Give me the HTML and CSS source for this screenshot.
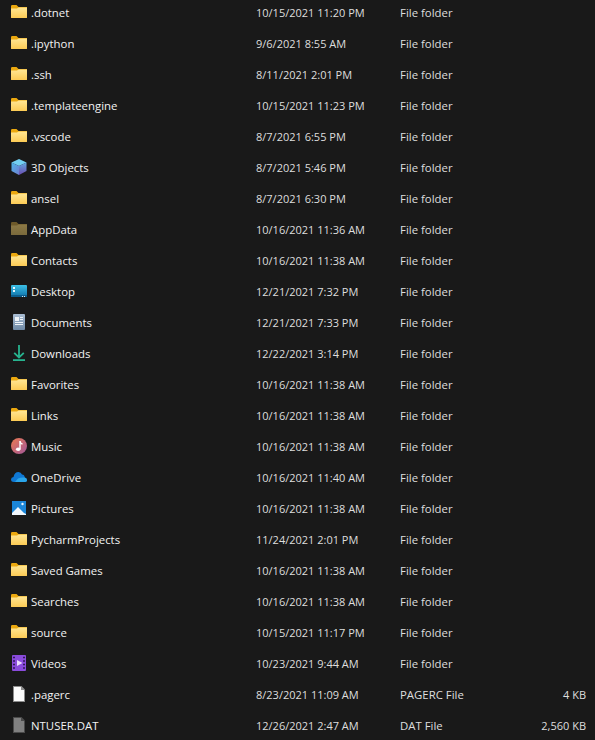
FILE: index.html
```html
<!DOCTYPE html>
<html lang="en">
<head>
<meta charset="utf-8">
<title>Home folder</title>
<link rel="stylesheet" href="styles.css">
</head>
<body>
<svg class="defs" width="0" height="0" aria-hidden="true">
  <defs>
    <linearGradient id="fg" x1="0" y1="0" x2="0" y2="1"><stop offset="0" stop-color="#ffe694"/><stop offset="1" stop-color="#fccb55"/></linearGradient>
    <linearGradient id="fd" x1="0" y1="0" x2="0" y2="1"><stop offset="0" stop-color="#8d7a46"/><stop offset="1" stop-color="#7a6a3c"/></linearGradient>
    <linearGradient id="cubeL" x1="0" y1="0" x2="1" y2="1"><stop offset="0" stop-color="#4fb6ea"/><stop offset="1" stop-color="#6f7fd0"/></linearGradient>
    <linearGradient id="cubeR" x1="0" y1="0" x2="0" y2="1"><stop offset="0" stop-color="#62a8df"/><stop offset="1" stop-color="#6a4bb0"/></linearGradient>
    <linearGradient id="desk" x1="0" y1="0" x2="0" y2="1"><stop offset="0" stop-color="#3cc0e6"/><stop offset="1" stop-color="#1176ac"/></linearGradient>
    <linearGradient id="doc" x1="0" y1="0" x2="0" y2="1"><stop offset="0" stop-color="#a9bdd3"/><stop offset="1" stop-color="#6f8aa6"/></linearGradient>
    <linearGradient id="mus" x1="0" y1="0" x2="1" y2="1"><stop offset="0" stop-color="#ee7b50"/><stop offset="1" stop-color="#a0569a"/></linearGradient>
    <symbol id="folder" viewBox="0 0 16 16"><path d="M0 2.200Q0 1 1.200 1H5.500L7.500 3H16V14H0Z" fill="#eba80f"/><path d="M0 4.500H6L7.500 3.500H16V13.300Q16 14 15.300 14H.7Q0 14 0 13.300Z" fill="url(#fg)"/></symbol>
    <symbol id="folder-dim" viewBox="0 0 16 16"><path d="M0 2.200Q0 1 1.200 1H5.500L7.500 3H16V14H0Z" fill="#6e5a2a"/><path d="M0 4.500H6L7.500 3.500H16V13.300Q16 14 15.300 14H.7Q0 14 0 13.300Z" fill="url(#fd)"/></symbol>
    <symbol id="objects" viewBox="0 0 16 16"><path d="M8 0 15.500 3.500 8 7 .5 3.500Z" fill="#72d0f2"/><path d="M.5 3.500 8 7V16L.5 12Z" fill="url(#cubeL)"/><path d="M15.500 3.500 8 7V16L15.500 12Z" fill="url(#cubeR)"/></symbol>
    <symbol id="desktop" viewBox="0 0 16 16"><rect y="2" width="16" height="11" rx="1" fill="url(#desk)"/><rect y="12" width="16" height="2" fill="#0c5d8c"/><rect x="2" y="4" width="2" height="2" fill="#e8f6fc"/><rect x="2" y="7" width="2" height="2" fill="#e8f6fc"/><rect x="11" y="13" width="1" height="1" fill="#cfe6f2"/><rect x="13" y="13" width="1" height="1" fill="#cfe6f2"/></symbol>
    <symbol id="documents" viewBox="0 0 16 16"><rect x="2" width="12" height="16" rx="1" fill="url(#doc)"/><rect x="4" y="3" width="4" height="4" fill="#eef3f8"/><path d="M9 3.500h3M9 5.500h3M4 8.500h8M4 10.500h8" stroke="#eef3f8" stroke-width="1"/></symbol>
    <symbol id="downloads" viewBox="0 0 16 16"><path d="M8 0V12.500M3.200 7.800 8 12.500 12.800 7.800" fill="none" stroke="#27b48f" stroke-width="1.800"/><rect x="2" y="14.200" width="12" height="1.800" fill="#27b48f"/></symbol>
    <symbol id="music" viewBox="0 0 16 16"><circle cx="8" cy="8" r="8" fill="url(#mus)"/><path d="M9 3V11" stroke="#fff" stroke-width="1.400"/><path d="M9 3.300Q9.500 5.500 11.500 6" stroke="#fff" stroke-width="1.300" fill="none"/><ellipse cx="7.200" cy="11.300" rx="2.300" ry="1.800" fill="#fff"/></symbol>
    <symbol id="onedrive" viewBox="0 0 16 16"><path d="M3 13Q0 13 0 10.500 0 8.300 2.500 8 3.500 3 7.500 3 10 3 11 5.500 13.500 5.500 13.800 8.500 16 9.300 16 11.300 16 13 14 13Z" fill="#0f78d4"/><path d="M4 13 7 9.500Q10 8 13.800 8.500 16 9.300 16 11.300 16 13 14 13Z" fill="#2ba6ea"/></symbol>
    <symbol id="pictures" viewBox="0 0 16 16"><rect x="1" y="1" width="14" height="14" fill="#1b86d8"/><path d="M1 13 7 7 13 13 15 14V15H1Z" fill="#f2f8fd"/><circle cx="11.500" cy="4" r="1.200" fill="#eaf5fd"/></symbol>
    <symbol id="videos" viewBox="0 0 16 16"><rect x="1" y="0" width="14" height="16" rx="1" fill="#8a4bdc"/><path d="M6 5 11.500 8 6 11Z" fill="#eadcfc"/><path d="M2 2.500h2M2 6h2M2 9.500h2M2 13h2M12 2.500h2M12 6h2M12 9.500h2M12 13h2" stroke="#32195a" stroke-width="1.300"/></symbol>
    <symbol id="file" viewBox="0 0 16 16"><path d="M2 0H10.500L14 3.500V16H2Z" fill="#8c8c8c"/><path d="M3 1H10V4H13V15H3Z" fill="#fbfbfb"/></symbol>
    <symbol id="file-dim" viewBox="0 0 16 16"><path d="M2 0H10.500L14 3.500V16H2Z" fill="#4a4a4a"/><path d="M3 1H10V4H13V15H3Z" fill="#808080"/></symbol>
  </defs>
</svg>
<main class="list">
  <div class="row"><svg class="ico"><use href="#folder"/></svg><span class="name">.dotnet</span><span class="date">10/15/2021 11:20 PM</span><span>File folder</span><span class="size"></span></div>
  <div class="row"><svg class="ico"><use href="#folder"/></svg><span class="name">.ipython</span><span class="date">9/6/2021 8:55 AM</span><span>File folder</span><span class="size"></span></div>
  <div class="row"><svg class="ico"><use href="#folder"/></svg><span class="name">.ssh</span><span class="date">8/11/2021 2:01 PM</span><span>File folder</span><span class="size"></span></div>
  <div class="row"><svg class="ico"><use href="#folder"/></svg><span class="name">.templateengine</span><span class="date">10/15/2021 11:23 PM</span><span>File folder</span><span class="size"></span></div>
  <div class="row"><svg class="ico"><use href="#folder"/></svg><span class="name">.vscode</span><span class="date">8/7/2021 6:55 PM</span><span>File folder</span><span class="size"></span></div>
  <div class="row"><svg class="ico"><use href="#objects"/></svg><span class="name">3D Objects</span><span class="date">8/7/2021 5:46 PM</span><span>File folder</span><span class="size"></span></div>
  <div class="row"><svg class="ico"><use href="#folder"/></svg><span class="name">ansel</span><span class="date">8/7/2021 6:30 PM</span><span>File folder</span><span class="size"></span></div>
  <div class="row"><svg class="ico"><use href="#folder-dim"/></svg><span class="name">AppData</span><span class="date">10/16/2021 11:36 AM</span><span>File folder</span><span class="size"></span></div>
  <div class="row"><svg class="ico"><use href="#folder"/></svg><span class="name">Contacts</span><span class="date">10/16/2021 11:38 AM</span><span>File folder</span><span class="size"></span></div>
  <div class="row"><svg class="ico"><use href="#desktop"/></svg><span class="name">Desktop</span><span class="date">12/21/2021 7:32 PM</span><span>File folder</span><span class="size"></span></div>
  <div class="row"><svg class="ico"><use href="#documents"/></svg><span class="name">Documents</span><span class="date">12/21/2021 7:33 PM</span><span>File folder</span><span class="size"></span></div>
  <div class="row"><svg class="ico"><use href="#downloads"/></svg><span class="name">Downloads</span><span class="date">12/22/2021 3:14 PM</span><span>File folder</span><span class="size"></span></div>
  <div class="row"><svg class="ico"><use href="#folder"/></svg><span class="name">Favorites</span><span class="date">10/16/2021 11:38 AM</span><span>File folder</span><span class="size"></span></div>
  <div class="row"><svg class="ico"><use href="#folder"/></svg><span class="name">Links</span><span class="date">10/16/2021 11:38 AM</span><span>File folder</span><span class="size"></span></div>
  <div class="row"><svg class="ico"><use href="#music"/></svg><span class="name">Music</span><span class="date">10/16/2021 11:38 AM</span><span>File folder</span><span class="size"></span></div>
  <div class="row"><svg class="ico"><use href="#onedrive"/></svg><span class="name">OneDrive</span><span class="date">10/16/2021 11:40 AM</span><span>File folder</span><span class="size"></span></div>
  <div class="row"><svg class="ico"><use href="#pictures"/></svg><span class="name">Pictures</span><span class="date">10/16/2021 11:38 AM</span><span>File folder</span><span class="size"></span></div>
  <div class="row"><svg class="ico"><use href="#folder"/></svg><span class="name">PycharmProjects</span><span class="date">11/24/2021 2:01 PM</span><span>File folder</span><span class="size"></span></div>
  <div class="row"><svg class="ico"><use href="#folder"/></svg><span class="name">Saved Games</span><span class="date">10/16/2021 11:38 AM</span><span>File folder</span><span class="size"></span></div>
  <div class="row"><svg class="ico"><use href="#folder"/></svg><span class="name">Searches</span><span class="date">10/16/2021 11:38 AM</span><span>File folder</span><span class="size"></span></div>
  <div class="row"><svg class="ico"><use href="#folder"/></svg><span class="name">source</span><span class="date">10/15/2021 11:17 PM</span><span>File folder</span><span class="size"></span></div>
  <div class="row"><svg class="ico"><use href="#videos"/></svg><span class="name">Videos</span><span class="date">10/23/2021 9:44 AM</span><span>File folder</span><span class="size"></span></div>
  <div class="row"><svg class="ico"><use href="#file"/></svg><span class="name">.pagerc</span><span class="date">8/23/2021 11:09 AM</span><span>PAGERC File</span><span class="size">4 KB</span></div>
  <div class="row"><svg class="ico"><use href="#file-dim"/></svg><span class="name">NTUSER.DAT</span><span class="date">12/26/2021 2:47 AM</span><span>DAT File</span><span class="size">2,560 KB</span></div>
</main>
</body>
</html>
```
FILE: styles.css
```css
html, body {
  margin: 0;
  height: 740px;
  overflow: hidden;
  background: #191919;
}
.defs { display: block; height: 0; }
.list {
  margin-top: -3px;
  font-family: "Open Sans", "Liberation Sans", sans-serif;
  font-size: 11.4px;
  color: #dedede;
}
.row {
  display: grid;
  grid-template-columns: 16px 229px 144px 100px 86px;
  height: 31px;
  align-items: center;
  padding-left: 11px;
}
.ico { width: 16px; height: 16px; margin-top: -1px; }
.name { padding-left: 4px; color: #f2f2f2; }
.date { font-size: 11px; }
.size { text-align: right; font-size: 11px; }
```
